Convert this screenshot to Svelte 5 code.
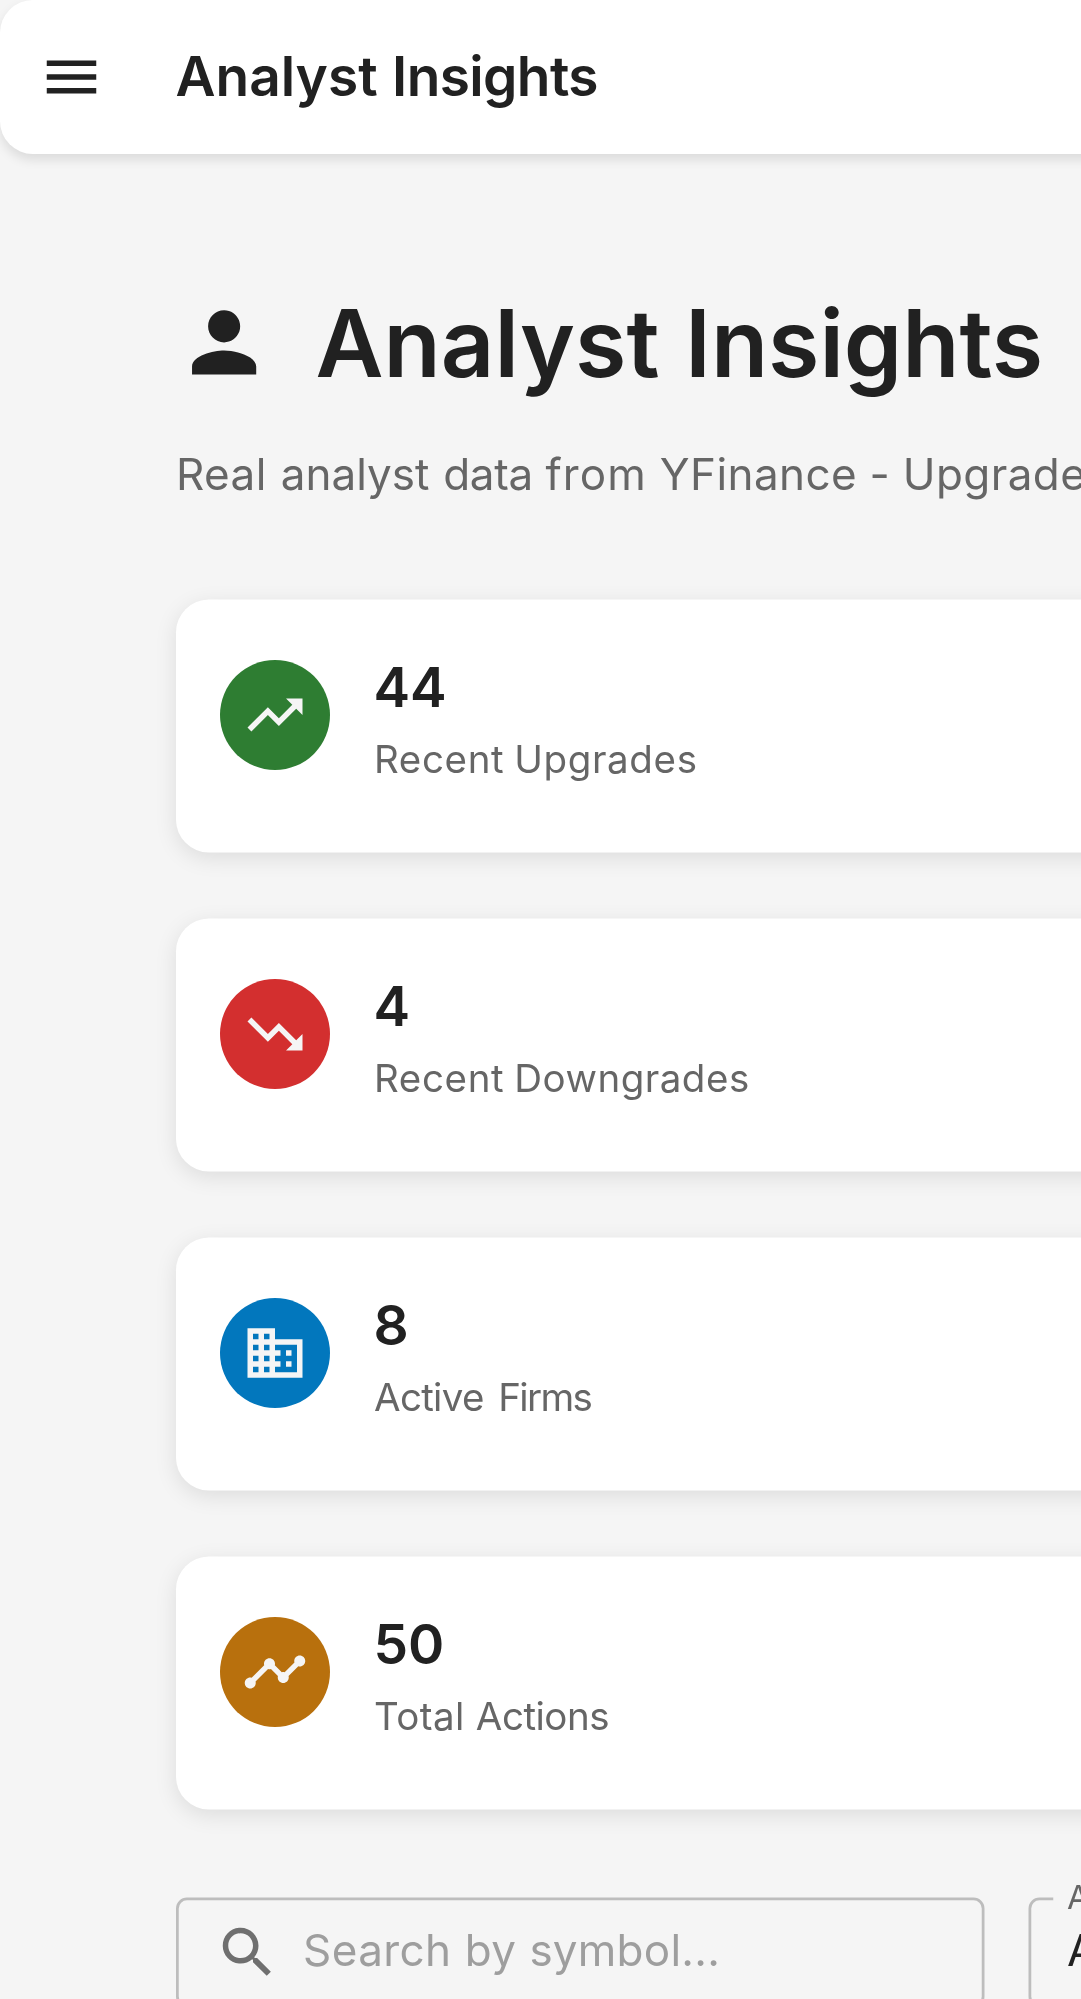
<script>
  // Each word carries its own tracking and leading offset, in px.
  const barTitle = [
    { text: 'Analyst', track: 0, lead: -0.2 },
    { text: 'Insights', track: -0.22, lead: 0.2 }
  ];
  const pageTitle = [
    { text: 'Analyst', track: 0.03, lead: -0.3 },
    { text: 'Insights', track: -0.01, lead: 0.7 }
  ];
  const subtitle = [
    { text: 'Real', track: 0.15, lead: 0 },
    { text: 'analyst', track: 0, lead: 0.6 },
    { text: 'data', track: -0.1, lead: 0.5 },
    { text: 'from', track: 0.4, lead: 0 },
    { text: 'YFinance', track: 0.15, lead: 0.2 },
    { text: '-', track: 0.15, lead: 0 },
    { text: 'Upgrades', track: 0.15, lead: 0.1 }
  ];
  const placeholder = [
    { text: 'Search', track: 0.15, lead: 0.2 },
    { text: 'by', track: 0.15, lead: 0 },
    { text: 'symbol...', track: 0.09, lead: -0.1 }
  ];

  const stats = [
    {
      value: '44',
      label: [
        { text: 'Recent', track: 0.23, lead: 0 },
        { text: 'Upgrades', track: 0.23, lead: -0.3 }
      ],
      tone: 'green',
      path: 'm16 6 2.29 2.29-4.88 4.88-4-4L2 16.59 3.41 18l6-6 4 4 6.3-6.29L22 12V6z'
    },
    {
      value: '4',
      label: [
        { text: 'Recent', track: 0.23, lead: 0 },
        { text: 'Downgrades', track: 0.18, lead: -0.3 }
      ],
      tone: 'red',
      path: 'm16 18 2.29-2.29-4.88-4.88-4 4L2 7.41 3.41 6l6 6 4-4 6.3 6.29L22 12v6z'
    },
    {
      value: '8',
      label: [
        { text: 'Active', track: -0.25, lead: 0 },
        { text: 'Firms', track: -0.62, lead: 1.4 }
      ],
      tone: 'blue',
      path: 'M12 7V3H2v18h20V7zM6 19H4v-2h2zm0-4H4v-2h2zm0-4H4V9h2zm0-4H4V5h2zm4 12H8v-2h2zm0-4H8v-2h2zm0-4H8V9h2zm0-4H8V5h2zm10 12h-8v-2h2v-2h-2v-2h2v-2h-2V9h8zm-2-8h-2v2h2zm0 4h-2v2h2z'
    },
    {
      value: '50',
      label: [
        { text: 'Total', track: 0.15, lead: 0 },
        { text: 'Actions', track: -0.18, lead: 0.1 }
      ],
      tone: 'amber',
      path: 'M23 8c0 1.1-.9 2-2 2-.18 0-.35-.02-.51-.07l-3.56 3.55c.05.16.07.34.07.52 0 1.1-.9 2-2 2s-2-.9-2-2c0-.18.02-.36.07-.52l-2.55-2.55c-.16.05-.34.07-.52.07s-.36-.02-.52-.07l-4.55 4.56c.05.16.07.33.07.51 0 1.1-.9 2-2 2s-2-.9-2-2 .9-2 2-2c.18 0 .35.02.51.07l4.56-4.55C8.02 9.36 8 9.18 8 9c0-1.1.9-2 2-2s2 .9 2 2c0 .18-.02.36-.07.52l2.55 2.55c.16-.05.34-.07.52-.07s.36.02.52.07l3.55-3.56C19.02 8.35 19 8.18 19 8c0-1.1.9-2 2-2s2 .9 2 2'
    }
  ];
</script>

{#snippet tracked(words)}
  {#each words as word, i}{i ? ' ' : ''}<span style="letter-spacing: {word.track}px; margin-left: {word.lead}px">{word.text}</span>{/each}
{/snippet}

<div class="screen">
  <div class="page">
    <header class="bar">
      <svg class="icon" viewBox="0 0 24 24"><path d="M3 18h18v-2H3zm0-5h18v-2H3zm0-7v2h18V6z" /></svg>
      <div class="bar-title">{@render tracked(barTitle)}</div>
    </header>

    <main>
      <div class="heading">
        <svg class="person" viewBox="0 0 24 24"><path d="M12 12c2.21 0 4-1.79 4-4s-1.79-4-4-4-4 1.79-4 4 1.79 4 4 4m0 2c-2.67 0-8 1.34-8 4v2h16v-2c0-2.66-5.33-4-8-4" /></svg>
        <h1>{@render tracked(pageTitle)}</h1>
      </div>
      <p class="subtitle">{@render tracked(subtitle)}</p>

      <section class="stats">
        {#each stats as stat}
          <article class="card">
            <div class="avatar {stat.tone}">
              <svg class="icon" viewBox="0 0 24 24"><path d={stat.path} /></svg>
            </div>
            <div class="texts">
              <div class="value">{stat.value}</div>
              <div class="label">{@render tracked(stat.label)}</div>
            </div>
          </article>
        {/each}
      </section>

      <section class="filters">
        <div class="field search">
          <svg class="icon" viewBox="0 0 24 24"><path d="M15.5 14h-.79l-.28-.27C15.41 12.59 16 11.11 16 9.5 16 5.91 13.09 3 9.5 3S3 5.91 3 9.5 5.91 16 9.5 16c1.61 0 3.09-.59 4.23-1.57l.27.28v.79l5 4.99L20.49 19zm-6 0C7.01 14 5 11.99 5 9.5S7.01 5 9.5 5 14 7.01 14 9.5 11.99 14 9.5 14" /></svg>
          <div class="placeholder">{@render tracked(placeholder)}</div>
        </div>
        <div class="field select">
          <span class="float">Action</span>
          <span class="chosen">All</span>
        </div>
      </section>
    </main>
  </div>
</div>

<style>
  :global(body) {
    background: #f5f5f5;
  }

  .screen {
    width: 1081px;
    height: 1999px;
    overflow: hidden;
    background: #f5f5f5;
  }

  /* Laid out on a phone-sized grid and enlarged to the window */
  .page {
    width: 420px;
    transform: scale(2.75);
    transform-origin: 0 0;
    color: #212121;
    font-family: Inter, 'Liberation Sans', sans-serif;
    font-size: 16px;
    white-space: nowrap;
  }

  .icon {
    display: block;
    flex: none;
    width: 24px;
    height: 24px;
    fill: currentColor;
  }

  .bar {
    box-sizing: border-box;
    height: 56px;
    padding-left: 14px;
    display: flex;
    align-items: center;
    gap: 26px;
    background: #fff;
    border-radius: 12px;
    box-shadow: 0 2px 4px rgba(0, 0, 0, 0.1);
  }

  .bar-title {
    font-size: 20px;
    font-weight: 600;
    line-height: 32px;
  }

  main {
    padding: 48px 0 0 64px;
  }

  .heading {
    display: flex;
    align-items: center;
    gap: 16px;
    height: 42px;
  }

  .person {
    flex: none;
    width: 35px;
    height: 35px;
    margin-bottom: 1px;
    fill: currentColor;
  }

  h1 {
    margin: 0;
    font-size: 34px;
    font-weight: 600;
    line-height: 1.235;
  }

  .subtitle {
    margin: 14px 0 0;
    line-height: 24px;
    color: #666;
  }

  .stats {
    display: grid;
    gap: 24px;
    margin-top: 34px;
  }

  .card {
    box-sizing: border-box;
    height: 92px;
    padding: 16px 16px 24px;
    display: flex;
    align-items: center;
    gap: 16px;
    background: #fff;
    border-radius: 12px;
    box-shadow: 0 2px 8px rgba(0, 0, 0, 0.1);
  }

  .avatar {
    flex: none;
    width: 40px;
    height: 40px;
    display: grid;
    place-items: center;
    border-radius: 50%;
    color: #f5f5f5;
  }

  .green { background: #2e7d32; }
  .red { background: #d32f2f; }
  .blue { background: #0277bd; }
  .amber { background: #b8700d; }

  .value {
    margin-left: -0.2px;
    font-size: 20px;
    font-weight: 600;
    line-height: 32px;
  }

  .label {
    font-size: 14px;
    line-height: 20px;
    color: #666;
  }

  .filters {
    display: flex;
    gap: 16px;
    margin-top: 32px;
  }

  .field {
    box-sizing: border-box;
    flex: none;
    width: 294px;
    height: 40px;
    border: 1px solid #bdbdbd;
    border-radius: 4px;
    display: flex;
    align-items: center;
    letter-spacing: 0.15px;
  }

  .search {
    padding-left: 13px;
    gap: 8px;
    color: #6f6f6f;
  }

  .placeholder {
    margin-bottom: 2px;
    color: #9e9e9e;
    line-height: 23px;
    word-spacing: 0.15px;
  }

  .select {
    position: relative;
    padding-left: 13px;
  }

  .chosen {
    margin-bottom: 2px;
    line-height: 23px;
  }

  /* Floating label that cuts a notch into the outline */
  .float {
    position: absolute;
    top: -10.5px;
    left: 8px;
    padding: 0 5px;
    background: #f5f5f5;
    color: #666;
    font-size: 12px;
    line-height: 18px;
  }
</style>
